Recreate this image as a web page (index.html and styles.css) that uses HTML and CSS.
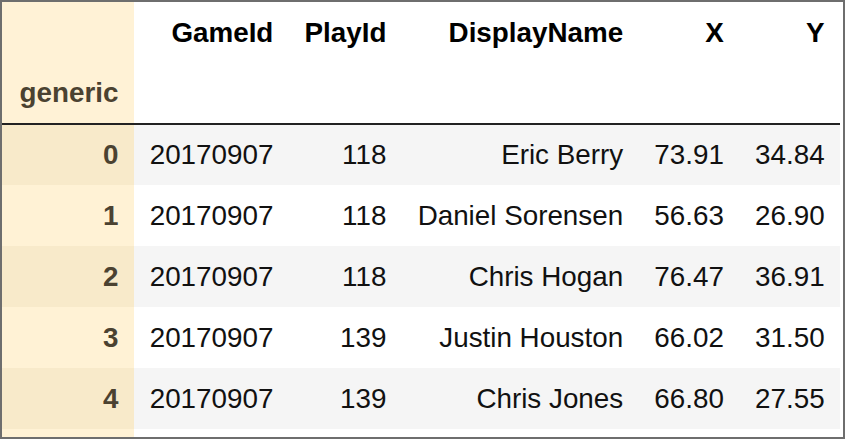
FILE: index.html
```html
<!DOCTYPE html>
<html>
<head>
<meta charset="utf-8">
<link rel="stylesheet" href="styles.css">
</head>
<body>
<div class="frame">
  <table class="df">
    <thead>
      <tr class="hrow1">
        <th class="idx-head"></th>
        <th>GameId</th>
        <th>PlayId</th>
        <th>DisplayName</th>
        <th>X</th>
        <th>Y</th>
      </tr>
      <tr class="hrow2">
        <th class="idx-head">generic</th>
        <th></th>
        <th></th>
        <th></th>
        <th></th>
        <th></th>
      </tr>
    </thead>
    <tbody>
      <tr class="odd">
        <th class="idx">0</th>
        <td>20170907</td><td>118</td><td>Eric Berry</td><td>73.91</td><td>34.84</td>
      </tr>
      <tr class="even">
        <th class="idx">1</th>
        <td>20170907</td><td>118</td><td>Daniel Sorensen</td><td>56.63</td><td>26.90</td>
      </tr>
      <tr class="odd">
        <th class="idx">2</th>
        <td>20170907</td><td>118</td><td>Chris Hogan</td><td>76.47</td><td>36.91</td>
      </tr>
      <tr class="even">
        <th class="idx">3</th>
        <td>20170907</td><td>139</td><td>Justin Houston</td><td>66.02</td><td>31.50</td>
      </tr>
      <tr class="odd">
        <th class="idx">4</th>
        <td>20170907</td><td>139</td><td>Chris Jones</td><td>66.80</td><td>27.55</td>
      </tr>
      <tr class="even filler">
        <th class="idx"></th>
        <td></td><td></td><td></td><td></td><td></td>
      </tr>
    </tbody>
  </table>
</div>
</body>
</html>
```
FILE: styles.css
```css
html, body {
  margin: 0;
  padding: 0;
  background: #ffffff;
}

.frame {
  width: 841px;
  height: 435px;
  border: 2px solid #6e6e6e;
  overflow: hidden;
  background: #ffffff;
}

.df {
  border-collapse: collapse;
  border-spacing: 0;
  font-family: "Liberation Sans", Arial, sans-serif;
  font-size: 27.8px;
  color: #111111;
}

.df th,
.df td {
  padding: 0 15.6px;
  text-align: right;
  vertical-align: middle;
  white-space: nowrap;
  line-height: normal;
}

.df thead th.idx-head,
.df tbody th.idx {
  padding-left: 17.6px;
}

.df thead th {
  font-weight: bold;
  color: #000000;
  background: #ffffff;
}

.df thead .hrow1 th {
  height: 61px;
}

.df thead .hrow2 th {
  height: 60px;
  border-bottom: 2px solid #222222;
}

.df thead th.idx-head {
  background: #fff2d6;
  color: #4b4231;
}

.df tbody tr {
  height: 61px;
}

.df tbody tr.odd td {
  background: #f5f5f5;
}

.df tbody tr.even td {
  background: #ffffff;
}

.df tbody th.idx {
  font-weight: bold;
  color: #4b4231;
}

.df tbody tr.odd th.idx {
  background: #f8eaca;
}

.df tbody tr.even th.idx {
  background: #fff2d5;
}
```
